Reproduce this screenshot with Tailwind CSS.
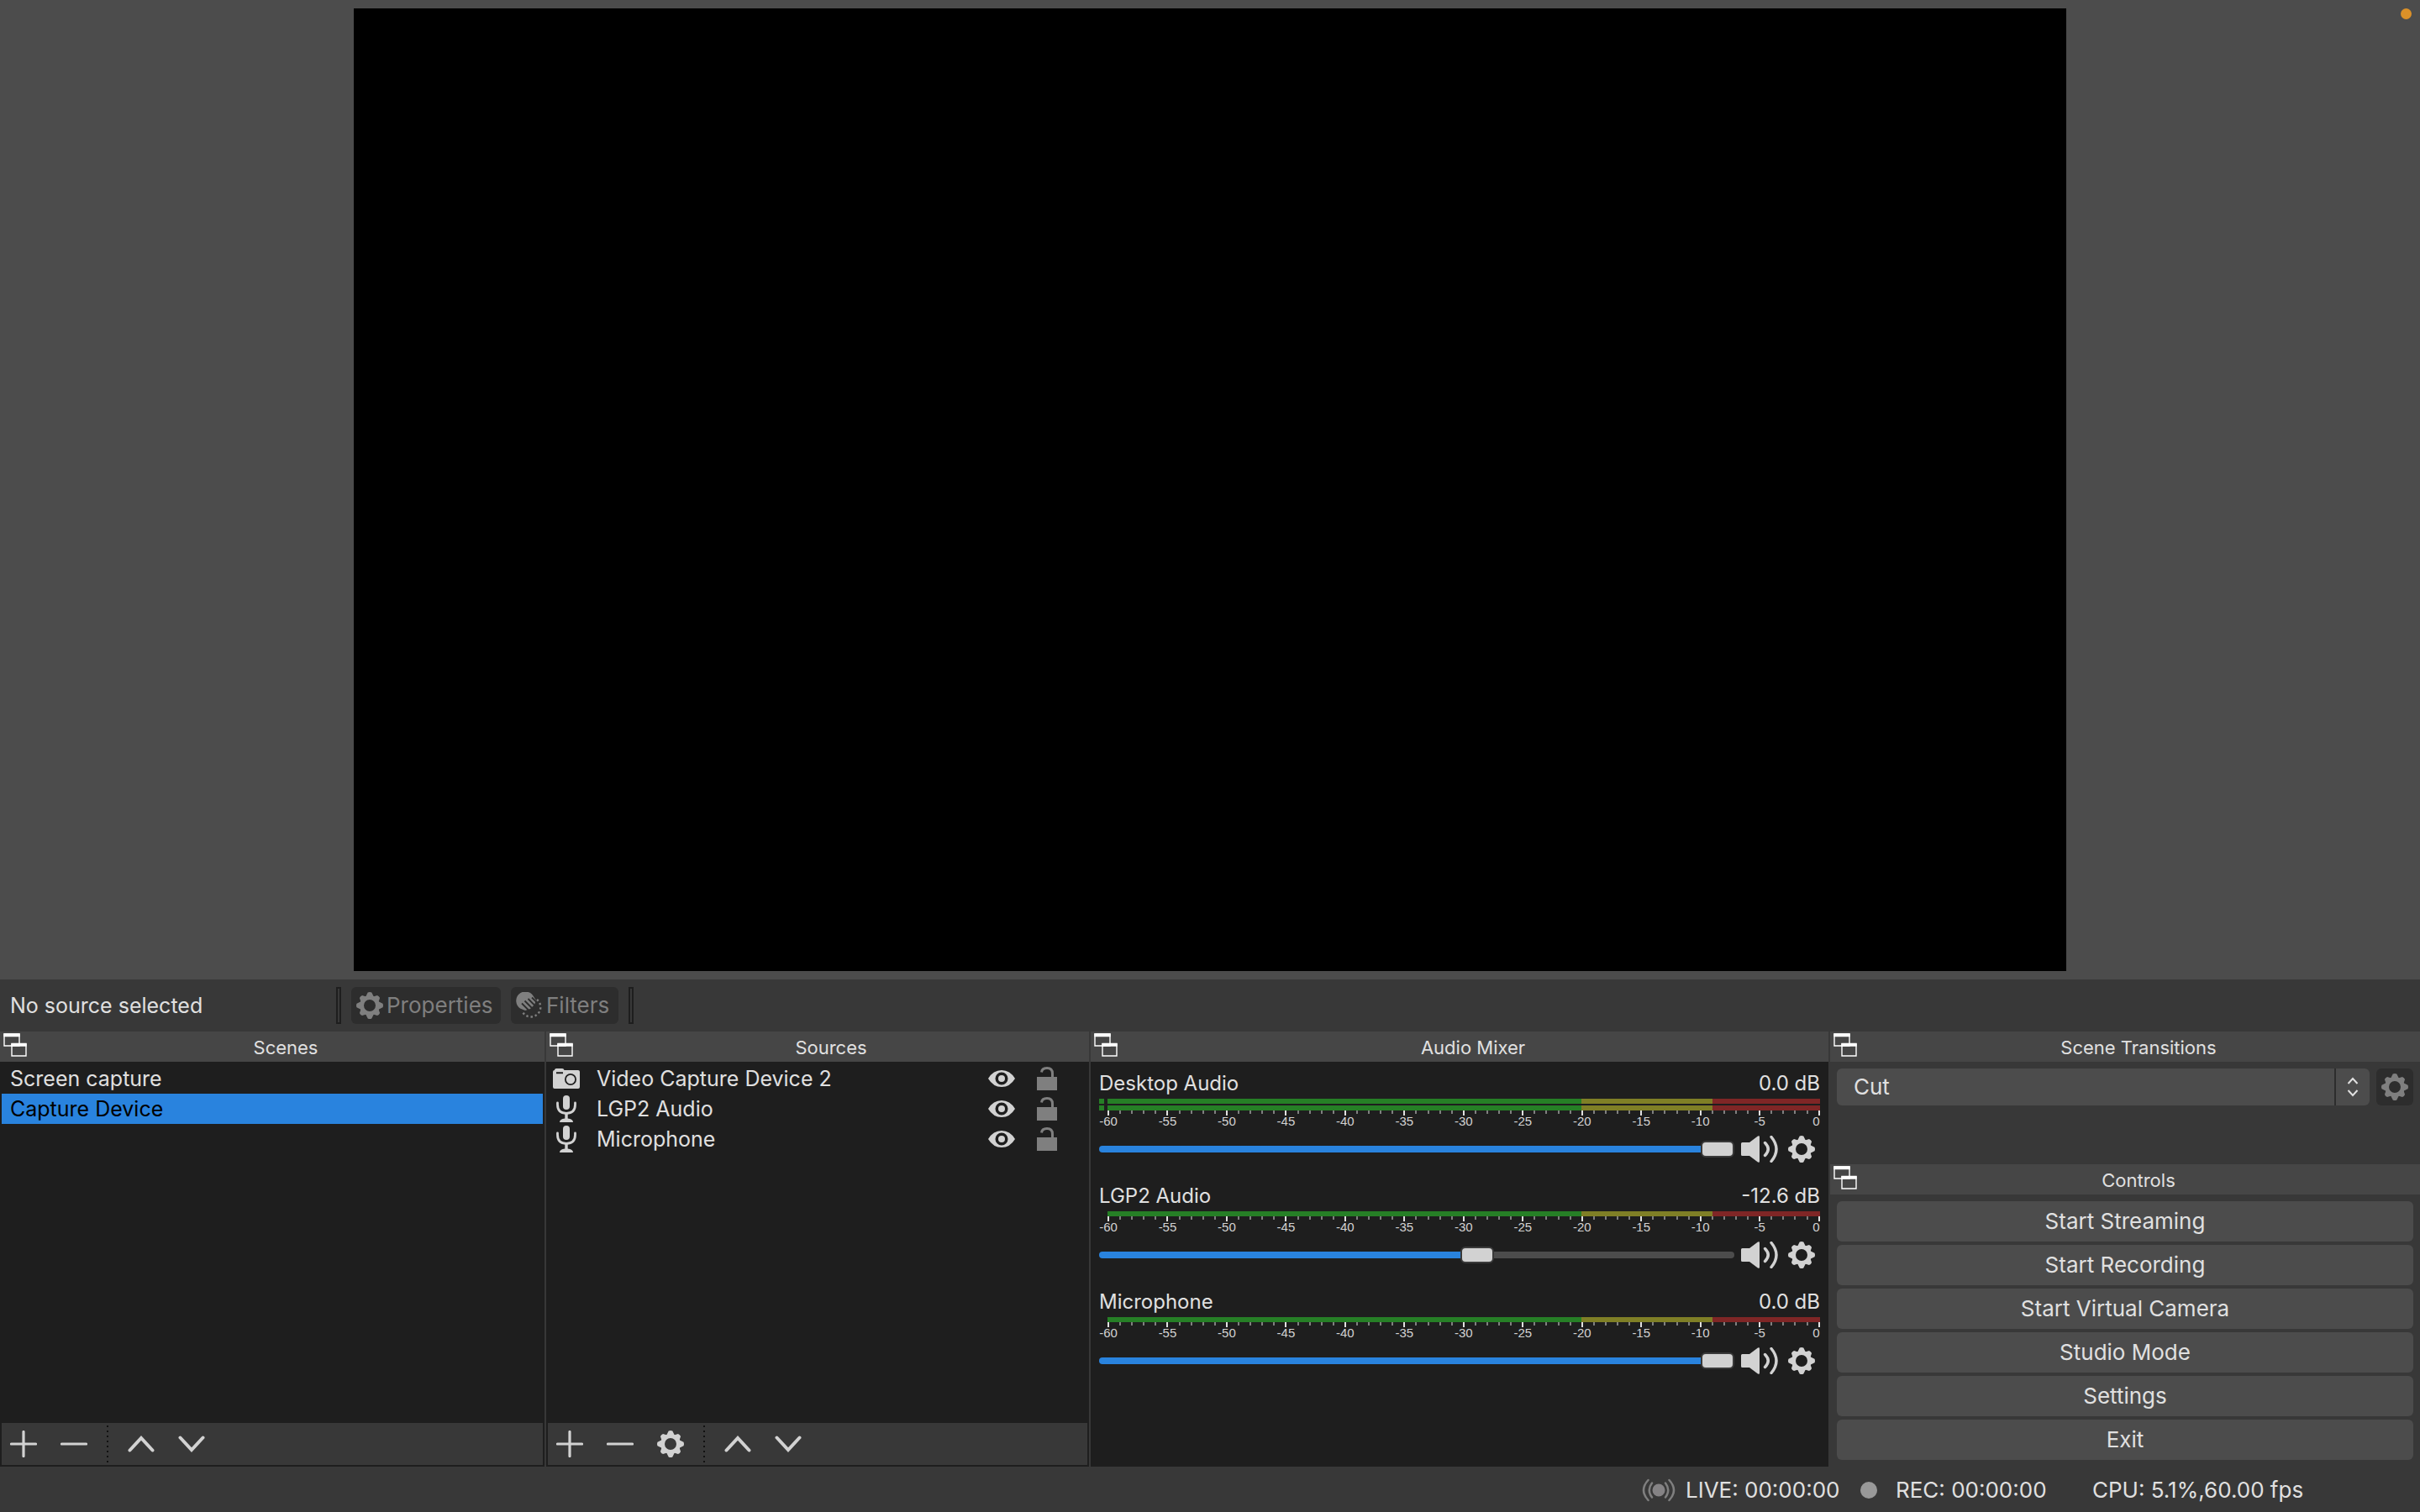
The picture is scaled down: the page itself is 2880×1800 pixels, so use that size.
<!DOCTYPE html>
<html lang="en">
<head>
  <meta charset="UTF-8" />
  <title>OBS Studio</title>
  <script src="https://cdn.jsdelivr.net/npm/@tailwindcss/browser@4"></script>
</head>
<body class="relative h-screen min-h-[1000px] flex flex-col bg-[#383838] text-[#e0e0e0] font-['Inter',sans-serif] text-[25px] leading-[36px] whitespace-nowrap">
  <svg class="hidden">
    <symbol id="dock" viewBox="0 0 28 28">
      <path d="M1 1h18v14H1z M10 13h17v14H10z" fill="none" stroke="#fff" stroke-width="1.4" />
      <path d="M.3 .3h19.4v4H.3z M9.3 11.7h18.4v4H9.3z" fill="#fff" />
    </symbol>
    <symbol id="gear" viewBox="-16 -16 32 32">
      <g fill="currentColor">
        <path id="teeth" d="M-5 -10L-2.3 -15.5Q0 -16.5 2.3 -15.5L5 -10ZM-5 10L-2.3 15.5Q0 16.5 2.3 15.5L5 10ZM-10 -5L-15.5 -2.3Q-16.5 0 -15.5 2.3L-10 5ZM10 -5L15.5 -2.3Q16.5 0 15.5 2.3L10 5Z" />
        <use href="#teeth" transform="rotate(45) scale(.96)" />
      </g>
      <circle r="9.4" fill="none" stroke="currentColor" stroke-width="4.8" />
    </symbol>
    <symbol id="speaker" viewBox="0 0 44 32">
      <path d="M1.5 8H10L20 .5Q22 -.5 22 1.5V30.5Q22 32.5 20 31.5L10 24H1.5Q0 24 0 22.5V9.5Q0 8 1.5 8Z" fill="currentColor" />
      <path d="M28.5 8.5Q36 16 28.5 23.5M36 1.5Q48 16 36 30.5" fill="none" stroke="currentColor" stroke-width="3.4" stroke-linecap="round" />
    </symbol>
    <symbol id="camera" viewBox="0 0 32 24">
      <path fill="currentColor" fill-rule="evenodd" d="M2 2V1.5Q2.3 0 4 0H11Q13 0 13.5 2H30Q32 2 32 4V22Q32 24 30 24H2Q0 24 0 22V4Q0 2 2 2ZM4 4.3V6.3H12V4.3ZM21 6A7 7 0 1 0 21 20A7 7 0 1 0 21 6ZM21 7.8A5.2 5.2 0 1 1 21 18.2A5.2 5.2 0 1 1 21 7.8Z" />
    </symbol>
    <symbol id="mic" viewBox="0 0 24 32">
      <rect x="8" y="0" width="8" height="17" rx="4" fill="currentColor" />
      <path d="M1.5 9V11Q1.5 21 12 21.5Q22.5 21 22.5 11V9" fill="none" stroke="currentColor" stroke-width="2.8" stroke-linecap="round" />
      <path d="M10.3 21H13.7V27.5Q20 28 20 32H4Q4 28 10.3 27.5Z" fill="currentColor" />
    </symbol>
    <symbol id="eye" viewBox="0 0 32 20">
      <path fill="currentColor" fill-rule="evenodd" d="M0 10Q6 0 16 0Q26 0 32 10Q26 20 16 20Q6 20 0 10ZM16 2.5A7.5 7.5 0 1 0 16 17.5A7.5 7.5 0 1 0 16 2.5Z" />
      <circle cx="16" cy="10" r="4" fill="currentColor" />
    </symbol>
    <symbol id="lock" viewBox="0 0 24 28">
      <path d="M0 12H24V28H0Z" fill="currentColor" />
      <path d="M5.5 6.5Q6 1.5 12 1.5Q18.5 1.5 18.5 8V12" fill="none" stroke="currentColor" stroke-width="3" />
    </symbol>
    <symbol id="plus" viewBox="0 0 32 32"><path d="M16 1.5V30.5M1.5 16H30.5" stroke="currentColor" stroke-width="3.2" stroke-linecap="round" /></symbol>
    <symbol id="minus" viewBox="0 0 32 32"><path d="M1.5 16H30.5" stroke="currentColor" stroke-width="3.2" stroke-linecap="round" /></symbol>
    <symbol id="up" viewBox="0 0 32 32"><path d="M2.5 23.5L16 9L29.5 23.5" fill="none" stroke="currentColor" stroke-width="4" stroke-linecap="round" /></symbol>
    <symbol id="down" viewBox="0 0 32 32"><path d="M2.5 8.5L16 23L29.5 8.5" fill="none" stroke="currentColor" stroke-width="4" stroke-linecap="round" /></symbol>
    <symbol id="filters" viewBox="0 0 32 32">
      <path d="M5 19.5A11 11 0 1 1 20.5 4.5L24 10L22 15L17 20L11 22Z" fill="currentColor" />
      <path d="M7 13.5L16 22.5M10.5 10.5L20 20M14.5 8L23.5 17M19 6.5L25 12.5" stroke="#2d2d2d" stroke-width="1.8" />
      <path d="M25 9A11.500 11.500 0 1 1 8 24" fill="none" stroke="currentColor" stroke-width="2.4" stroke-dasharray="2.4 2.8" />
    </symbol>
  </svg>

  <div class="absolute top-[10px] right-[10px] size-[13px] rounded-full bg-[#dc9128]"></div>

  <!-- Preview -->
  <main class="flex-1 min-h-0 flex justify-center bg-[#4c4c4c] py-[10px]">
    <div class="h-full aspect-video bg-black"></div>
  </main>

  <!-- Context bar -->
  <div class="flex items-center h-[62px] py-2">
    <span class="w-[400px] pl-3">No source selected</span>
    <span class="w-[6px] h-[44px] border-2 border-[#1e1e1e] mr-3"></span>
    <button class="flex items-center w-[178px] h-[44px] pl-[6px] gap-1 rounded-md bg-[#2d2d2d] text-[26px] text-[#7f7f7f]"><svg class="size-8"><use href="#gear" /></svg>Properties</button>
    <button class="flex items-center w-[128px] h-[44px] pl-[6px] gap-1 ml-3 rounded-md bg-[#2d2d2d] text-[26px] text-[#7f7f7f]"><svg class="size-8"><use href="#filters" /></svg>Filters</button>
    <span class="w-[6px] h-[44px] border-2 border-[#1e1e1e] ml-3"></span>
  </div>

  <!-- Docks -->
  <div class="grid grid-cols-[648fr_646fr_878fr_702fr] gap-[2px]">
    <section class="flex flex-col bg-[#1e1e1e]">
      <header class="flex h-9 pl-1 pt-[2px] bg-[#464646]"><svg class="size-7"><use href="#dock" /></svg><h2 class="flex-1 text-center text-[22px] leading-[34px]">Scenes</h2></header>
      <ul class="flex-1 p-[2px]">
        <li><button class="block w-full text-left pl-[10px]">Screen capture</button></li>
        <li><button class="block w-full text-left pl-[10px] bg-[#2983de] text-black">Capture Device</button></li>
      </ul>
      <div class="flex items-center gap-2 h-[50px] mx-[2px] mb-[2px] bg-[#383838] text-[#d2d2d2]">
        <button aria-label="Add scene" class="w-[52px] flex justify-center"><svg class="size-8"><use href="#plus" /></svg></button>
        <button aria-label="Remove scene" class="w-[52px] flex justify-center"><svg class="size-8"><use href="#minus" /></svg></button>
        <span class="w-3 flex justify-center"><span class="w-[2px] h-[44px] bg-[repeating-linear-gradient(#111_0_2px,transparent_2px_6px)]"></span></span>
        <button aria-label="Move scene up" class="w-[52px] flex justify-center"><svg class="size-8"><use href="#up" /></svg></button>
        <button aria-label="Move scene down" class="w-[52px] flex justify-center"><svg class="size-8"><use href="#down" /></svg></button>
      </div>
    </section>

    <section class="flex flex-col bg-[#1e1e1e]">
      <header class="flex h-9 pl-1 pt-[2px] bg-[#464646]"><svg class="size-7"><use href="#dock" /></svg><h2 class="flex-1 text-center text-[22px] leading-[34px]">Sources</h2></header>
      <ul id="sources" class="flex-1 py-[2px]"></ul>
      <div class="flex items-center gap-2 h-[50px] mx-[2px] mb-[2px] bg-[#383838] text-[#d2d2d2]">
        <button aria-label="Add source" class="w-[52px] flex justify-center"><svg class="size-8"><use href="#plus" /></svg></button>
        <button aria-label="Remove source" class="w-[52px] flex justify-center"><svg class="size-8"><use href="#minus" /></svg></button>
        <button aria-label="Source properties" class="w-[52px] flex justify-center"><svg class="size-8"><use href="#gear" /></svg></button>
        <span class="w-3 flex justify-center"><span class="w-[2px] h-[44px] bg-[repeating-linear-gradient(#111_0_2px,transparent_2px_6px)]"></span></span>
        <button aria-label="Move source up" class="w-[52px] flex justify-center"><svg class="size-8"><use href="#up" /></svg></button>
        <button aria-label="Move source down" class="w-[52px] flex justify-center"><svg class="size-8"><use href="#down" /></svg></button>
      </div>
    </section>

    <section class="bg-[#1e1e1e]">
      <header class="flex h-9 pl-1 pt-[2px] bg-[#464646]"><svg class="size-7"><use href="#dock" /></svg><h2 class="flex-1 text-center text-[22px] leading-[34px]">Audio Mixer</h2></header>
      <div id="mixer" class="px-[10px] pt-2 flex flex-col gap-[22px] text-[24px]"></div>
    </section>

    <section>
      <header class="flex h-9 pl-1 pt-[2px] bg-[#464646]"><svg class="size-7"><use href="#dock" /></svg><h2 class="flex-1 text-center text-[22px] leading-[34px]">Scene Transitions</h2></header>
      <div class="flex items-start gap-2 p-2 h-[122px]">
        <div class="relative flex-1">
          <select aria-label="Transition" class="block w-full h-[44px] pl-5 appearance-none rounded-md bg-[#4c4c4c] text-[26px]"><option>Cut</option></select>
          <div class="absolute right-0 inset-y-0 w-[42px] border-l-2 border-[#2d2d2d] flex items-center justify-center pointer-events-none">
            <svg class="w-[14px] h-[24px]" viewBox="0 0 14 24" fill="none" stroke="#e0e0e0" stroke-width="2"><path d="M1.5 8L7 2L12.5 8M1.5 16L7 22L12.5 16" /></svg>
          </div>
        </div>
        <button aria-label="Transition properties" class="size-[44px] flex items-center justify-center rounded-md bg-[#2d2d2d] text-[#7f7f7f]"><svg class="size-8"><use href="#gear" /></svg></button>
      </div>
      <header class="flex h-9 pl-1 pt-[2px] bg-[#464646]"><svg class="size-7"><use href="#dock" /></svg><h2 class="flex-1 text-center text-[22px] leading-[34px]">Controls</h2></header>
      <div class="flex flex-col gap-1 p-2 text-[26px]">
        <button class="h-12 rounded-md bg-[#4c4c4c]">Start Streaming</button>
        <button class="h-12 rounded-md bg-[#4c4c4c]">Start Recording</button>
        <button class="h-12 rounded-md bg-[#4c4c4c]">Start Virtual Camera</button>
        <button class="h-12 rounded-md bg-[#4c4c4c]">Studio Mode</button>
        <button class="h-12 rounded-md bg-[#4c4c4c]">Settings</button>
        <button class="h-12 rounded-md bg-[#4c4c4c]">Exit</button>
      </div>
    </section>
  </div>

  <!-- Status bar -->
  <footer class="flex items-center justify-end h-[54px] pt-[2px] text-[26px]">
    <svg class="w-10 h-7 mr-3" viewBox="0 0 40 28" fill="none" stroke="#7f7f7f" stroke-width="2.5" stroke-linecap="round">
      <circle cx="20" cy="14" r="7.5" fill="#858385" stroke="none" />
      <path d="M12 5.5Q5.5 14 12 22.5M28 5.5Q34.5 14 28 22.5M7.5 2Q-3.5 14 7.5 26M32.5 2Q43.5 14 32.5 26" />
    </svg>
    <span class="w-[208px]">LIVE: 00:00:00</span>
    <span class="size-5 rounded-full bg-[#999] mr-[22px]"></span>
    <span class="w-[234px]">REC: 00:00:00</span>
    <span class="w-[390px]">CPU: 5.1%,60.00 fps</span>
  </footer>

  <script>
    const sources = [
      { name: "Video Capture Device 2", icon: '<svg class="w-8 h-6"><use href="#camera" /></svg>' },
      { name: "LGP2 Audio", icon: '<svg class="w-6 h-8"><use href="#mic" /></svg>' },
      { name: "Microphone", icon: '<svg class="w-6 h-8"><use href="#mic" /></svg>' }
    ];
    document.getElementById("sources").innerHTML = sources.map(s => `
      <li class="flex items-center h-9 pl-2 pr-[38px] text-[#d2d2d2]">
        <span class="w-8 flex justify-center">${s.icon}</span>
        <span class="flex-1 pl-5 text-[#e0e0e0]">${s.name}</span>
        <button aria-label="Toggle visibility"><svg class="w-8 h-5"><use href="#eye" /></svg></button>
        <button aria-label="Toggle lock" class="ml-[26px] text-[#7f7f7f]"><svg class="w-6 h-7"><use href="#lock" /></svg></button>
      </li>`).join("");

    const channels = [
      { name: "Desktop Audio", db: "0.0 dB", value: 100, bars: 2 },
      { name: "LGP2 Audio", db: "-12.6 dB", value: 60, bars: 1 },
      { name: "Microphone", db: "0.0 dB", value: 100, bars: 1 }
    ];

    function bar(stub) {
      return `<div class="flex h-[6px]">
        <span class="w-[6px] mr-1 ${stub ? "bg-[#267f26]" : ""}"></span>
        <div class="flex-1 grid grid-cols-[564fr_156fr_128fr]">
          <span class="bg-[#267f26]"></span><span class="bg-[#7f7f26]"></span><span class="bg-[#7f2626]"></span>
        </div>
      </div>`;
    }

    function ticks() {
      let out = "";
      for (let db = -60; db <= 0; db++) {
        if (db % 5 !== 0) {
          out += '<span class="w-[2px] h-1 bg-[#7f7f7f]"></span>';
        } else {
          const align = db === 0 ? "items-end" : "items-center";
          out += `<span class="w-[2px] flex flex-col ${align}"><span class="w-[2px] h-[6px] shrink-0 bg-[#e0e0e0]"></span><span>${db}</span></span>`;
        }
      }
      return out;
    }

    document.getElementById("mixer").innerHTML = channels.map((c, i) => `
      <div>
        <div class="flex justify-between"><label for="vol${i}">${c.name}</label><span>${c.db}</span></div>
        <div class="flex flex-col gap-[2px]">${c.bars === 2 ? bar(true) + bar(true) : bar(false)}</div>
        <div class="flex justify-between h-[30px] pl-[10px] font-['Liberation_Sans',sans-serif] text-[15px] leading-[13px] text-[#d2d2d2]">${ticks()}</div>
        <div class="flex items-center h-8 text-[#d2d2d2]">
          <input id="vol${i}" type="range" value="${c.value}" style="background-size: ${c.value}% 100%"
            class="flex-1 h-2 appearance-none rounded-full bg-[#4c4c4c] bg-linear-to-r from-[#2983de] to-[#2983de] bg-no-repeat [&::-webkit-slider-thumb]:appearance-none [&::-webkit-slider-thumb]:w-10 [&::-webkit-slider-thumb]:h-5 [&::-webkit-slider-thumb]:rounded-md [&::-webkit-slider-thumb]:border-2 [&::-webkit-slider-thumb]:border-[#3a3a3a] [&::-webkit-slider-thumb]:bg-[#d2d2d2]" />
          <button aria-label="Mute" class="ml-2"><svg class="w-11 h-8"><use href="#speaker" /></svg></button>
          <button aria-label="Audio settings" class="ml-3 mr-[6px]"><svg class="size-8"><use href="#gear" /></svg></button>
        </div>
      </div>`).join("");
  </script>
</body>
</html>
